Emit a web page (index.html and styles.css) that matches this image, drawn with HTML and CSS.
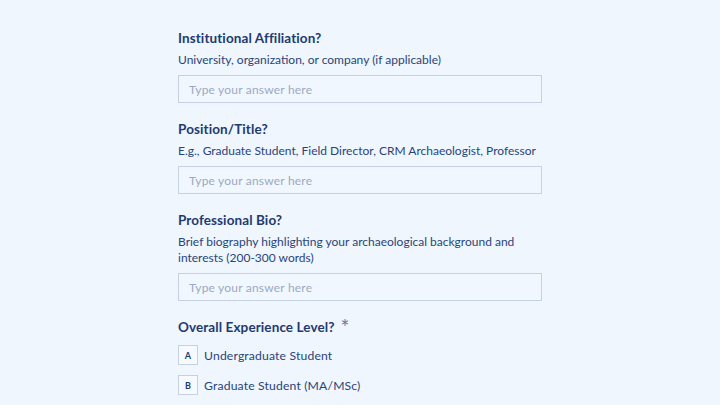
FILE: index.html
```html
<!DOCTYPE html>
<html lang="en">
<head>
  <meta charset="UTF-8" />
  <title>Archaeologist Profile</title>
  <link rel="stylesheet" href="styles.css">
</head>
<body>
  <div class="form">
    <div class="question">
      <h2>Institutional Affiliation?</h2>
      <p class="hint">University, organization, or company (if applicable)</p>
      <input type="text" placeholder="Type your answer here" />
    </div>

    <div class="question">
      <h2>Position/Title?</h2>
      <p class="hint">E.g., Graduate Student, Field Director, CRM Archaeologist, Professor</p>
      <input type="text" placeholder="Type your answer here" />
    </div>

    <div class="question">
      <h2>Professional Bio?</h2>
      <p class="hint">Brief biography highlighting your archaeological background and interests (200-300 words)</p>
      <input type="text" placeholder="Type your answer here" />
    </div>

    <div class="question">
      <h2>Overall Experience Level?<span class="required">*</span></h2>
      <ul class="choices">
        <li><span class="key">A</span> Undergraduate Student</li>
        <li><span class="key">B</span> Graduate Student (MA/MSc)</li>
        <li><span class="key">C</span> Doctoral Candidate (PhD)</li>
      </ul>
    </div>
  </div>
</body>
</html>
```

FILE: styles.css
```css
body {
  margin: 0;
  background: #eff6fe;
  color: #223a70;
  font-family: Lato, Arial, sans-serif;
}

.form {
  width: 364px;
  margin: 0 auto;
  padding-top: 28px;
}

.question {
  margin-bottom: 16px;
}

h2 {
  margin: 0;
  font-size: 13.5px;
  line-height: 20px;
  font-weight: 700;
  letter-spacing: 0.1px;
  color: #223a70;
}

.hint {
  margin: 4px 0 0;
  font-size: 12px;
  line-height: 16px;
  color: #2b4478;
}

input {
  display: block;
  width: 100%;
  height: 28px;
  margin-top: 7px;
  padding: 0 10px;
  box-sizing: border-box;
  border: 1px solid #c6d1e2;
  background: #f1f7fe;
  font-family: inherit;
  font-size: 12px;
  letter-spacing: 0.2px;
  color: #223a70;
}

input::placeholder {
  color: #9ba9c2;
}

.required {
  display: inline-block;
  vertical-align: top;
  margin-left: 6px;
  line-height: 20px;
  font-size: 21px;
  font-weight: 400;
  color: #6a7ca0;
}

.choices {
  list-style: none;
  margin: 8px 0 0;
  padding: 0;
}

.choices li {
  display: flex;
  align-items: center;
  gap: 6px;
  height: 20px;
  margin-bottom: 10px;
  font-size: 12.2px;
  letter-spacing: 0.15px;
  color: #2b4478;
}

.key {
  display: flex;
  align-items: center;
  justify-content: center;
  width: 18px;
  height: 18px;
  border: 1px solid #c6d1e2;
  background: #f6f9fe;
  font-size: 9px;
  font-weight: 700;
  color: #223a70;
}
```
